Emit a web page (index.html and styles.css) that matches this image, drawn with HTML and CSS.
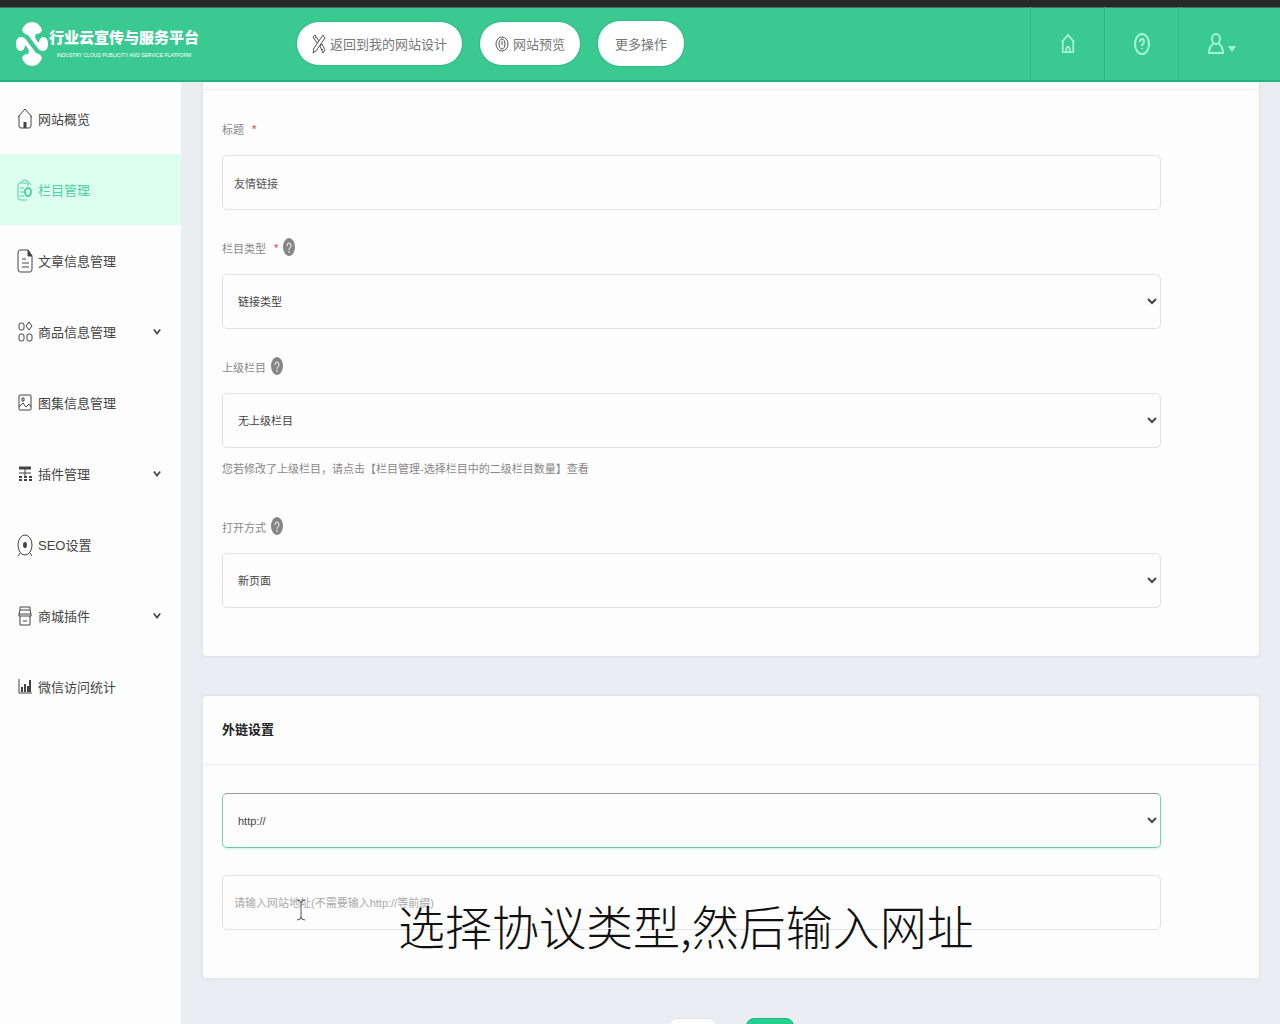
FILE: index.html
```html
<!DOCTYPE html>
<html lang="zh-CN">
<head>
<meta charset="utf-8">
<meta name="viewport" content="width=device-width, initial-scale=1">
<title>栏目管理</title>
<link rel="stylesheet" href="styles.css">
</head>
<body>
<div class="app">
  <header class="topbar">
    <a class="brand" href="#">
      <svg class="brand-mark" width="34" height="46" viewBox="0 0 34 46" aria-hidden="true">
        <g fill="#fff">
          <path d="M7 9Q10 1 17 1t10 8q-1 4-6 4-2 3 1 7l2 2q0-5 4-6 5 0 5 7t-5 7q-4 0-6-4L13 14Q8 13 7 9z"/>
          <path d="M27 37q-3 8-10 8T7 37q1-4 6-4 2-3-1-7l-2-2q0 5-4 6-5 0-5-7t5-7q4 0 6 4l9 12q5 1 6 5z"/>
        </g>
      </svg>
      <span class="brand-text">
        <strong class="brand-name">行业云宣传与服务平台</strong>
        <span class="brand-sub">INDUSTRY CLOUD PUBLICITY AND SERVICE PLATFORM</span>
      </span>
    </a>
    <nav class="actions" aria-label="快捷操作">
      <button class="pill" type="button">
        <svg width="14" height="20" viewBox="0 0 14 20" class="line" aria-hidden="true"><path d="M11 1l2 3-9 13-3 2 1-5zM1 3l2-2 4 6-2 2zM8 12l2-2 3 6-2 3zM3 4l1-1M10 16l1-1"/></svg>
        返回到我的网站设计
      </button>
      <button class="pill" type="button">
        <svg width="14" height="18" viewBox="0 0 14 18" class="line" aria-hidden="true"><ellipse cx="7" cy="9" rx="6" ry="7"/><ellipse cx="7" cy="9" rx="3" ry="5"/><path d="M7 6v4"/></svg>
        网站预览
      </button>
      <button class="pill pill-tall" type="button">更多操作</button>
    </nav>
    <nav class="tools" aria-label="账户">
      <a class="tool" href="#" aria-label="首页"><svg width="14" height="20" viewBox="0 0 16 22" preserveAspectRatio="none" class="line bold" aria-hidden="true"><path d="M1 9l7-8 7 8M2 8v12h12V8M6 20v-4q2-4 4 0v4"/></svg></a>
      <a class="tool" href="#" aria-label="帮助"><svg width="16" height="22" viewBox="0 0 16 22" class="line bold" aria-hidden="true"><ellipse cx="8" cy="11" rx="7" ry="10"/><path d="M6 9q0-3 2-3t2 3q0 2-2 3v1M8 15v1"/></svg></a>
      <a class="tool tool-user" href="#" aria-label="用户"><svg width="28" height="22" viewBox="0 0 28 22" class="line bold" aria-hidden="true"><ellipse cx="8" cy="6" rx="4" ry="5"/><path d="M5 11q-4 3-4 9h14q0-6-4-9"/><path d="M20 13h8l-4 6z" fill="currentColor" stroke="none"/></svg></a>
    </nav>
  </header>

  <div class="shell">
    <nav class="sidebar" aria-label="主菜单">
      <a class="item" href="#"><svg width="16" height="22" viewBox="0 0 16 22" class="line" aria-hidden="true"><path d="M1 9l7-8 7 8M2 8v10q0 2 2 2h8q2 0 2-2V8"/><path d="M8 14v6" stroke-width="3"/></svg><span>网站概览</span></a>
      <a class="item item-on" href="#"><svg width="16" height="24" viewBox="0 0 16 24" class="line" aria-hidden="true"><path d="M11 8V5H3Q1 5 1 8v11q0 3 2 3h7M4 5q1-3 4-3t6 5M3 10h4M3 14h4M3 18h4"/><ellipse cx="11" cy="14" rx="3" ry="4" stroke-width="2"/></svg><span>栏目管理</span></a>
      <a class="item" href="#"><svg width="16" height="24" viewBox="0 0 16 24" class="line" aria-hidden="true"><path d="M3 1h8l4 6v13q0 3-2 3H3q-2 0-2-3V4q0-3 2-3zM5 10h4M5 14h7M5 18h7"/><path d="M11 1v6h4z" fill="currentColor"/></svg><span>文章信息管理</span></a>
      <a class="item" href="#"><svg width="16" height="22" viewBox="0 0 16 22" class="line" aria-hidden="true"><rect x="2" y="2" width="5" height="7" rx="2"/><path d="M12 1l3 4-3 4-3-4z"/><rect x="2" y="13" width="5" height="7" rx="2"/><rect x="10" y="13" width="5" height="7" rx="2"/></svg><span>商品信息管理</span><svg class="chev line bold" width="8" height="8" viewBox="0 0 10 8" aria-hidden="true"><path d="M1 1l4 5 4-5"/></svg></a>
      <a class="item" href="#"><svg width="16" height="18" viewBox="0 0 16 18" class="line" aria-hidden="true"><rect x="2" y="1" width="12" height="15" rx="1"/><path d="M2 13l4-4 3 4 3-3 2 3M5 4v3h2V4z"/></svg><span>图集信息管理</span></a>
      <a class="item" href="#"><svg width="16" height="18" viewBox="0 0 16 18" class="line" aria-hidden="true"><path d="M2 3h12" stroke-width="3"/><path d="M8 4v8M2 8h12"/><path d="M2 12h3M7 12h3M12 12h3M2 15h3M7 15h3M12 15h3" stroke-width="2"/></svg><span>插件管理</span><svg class="chev line bold" width="8" height="8" viewBox="0 0 10 8" aria-hidden="true"><path d="M1 1l4 5 4-5"/></svg></a>
      <a class="item" href="#"><svg width="16" height="24" viewBox="0 0 16 24" class="line" aria-hidden="true"><ellipse cx="8" cy="12" rx="7" ry="10"/><ellipse cx="8" cy="12" rx="2" ry="3" fill="currentColor" stroke="none"/><path d="M3 20l-2 3M13 20l2 3"/></svg><span>SEO设置</span></a>
      <a class="item" href="#"><svg width="16" height="20" viewBox="0 0 16 20" class="line" aria-hidden="true"><path d="M3 1h10v3H3zM3 4L2 8v2h12V8l-1-4M2 8h12M3 10v9h10v-9M6 15h4"/></svg><span>商城插件</span><svg class="chev line bold" width="8" height="8" viewBox="0 0 10 8" aria-hidden="true"><path d="M1 1l4 5 4-5"/></svg></a>
      <a class="item" href="#"><svg width="16" height="18" viewBox="0 0 16 18" class="line" aria-hidden="true"><path d="M2 1v14h13"/><path d="M4 9h2v5H4zM7 6h2v8H7zM10 8h2v6h-2zM12 2h2v12h-2z" fill="currentColor" stroke="none"/></svg><span>微信访问统计</span></a>
    </nav>

    <main class="main">
      <form class="form">
        <section class="card card-first">
          <div class="card-edge"></div>
          <div class="card-body">
            <div class="field">
              <label class="label" for="title">标题 <span class="req">*</span></label>
              <input class="control" id="title" type="text" value="友情链接">
            </div>
            <div class="field">
              <label class="label" for="type">栏目类型 <span class="req">*</span>
                <svg class="help" width="12" height="20" viewBox="0 0 12 20" aria-hidden="true"><ellipse cx="6" cy="9" rx="6" ry="9"/><path d="M4 8q0-3 2-3t2 3q0 1-2 3v1M6 13v2"/></svg></label>
              <select class="control" id="type"><option>链接类型</option></select>
            </div>
            <div class="field">
              <label class="label" for="parent">上级栏目
                <svg class="help" width="12" height="20" viewBox="0 0 12 20" aria-hidden="true"><ellipse cx="6" cy="9" rx="6" ry="9"/><path d="M4 8q0-3 2-3t2 3q0 1-2 3v1M6 13v2"/></svg></label>
              <select class="control" id="parent"><option>无上级栏目</option></select>
              <p class="hint">您若修改了上级栏目，请点击【栏目管理-选择栏目中的二级栏目数量】查看</p>
            </div>
            <div class="field">
              <label class="label" for="target">打开方式
                <svg class="help" width="12" height="20" viewBox="0 0 12 20" aria-hidden="true"><ellipse cx="6" cy="9" rx="6" ry="9"/><path d="M4 8q0-3 2-3t2 3q0 1-2 3v1M6 13v2"/></svg></label>
              <select class="control" id="target"><option>新页面</option></select>
            </div>
          </div>
        </section>

        <section class="card">
          <h2 class="card-title">外链设置</h2>
          <div class="card-body">
            <select class="control control-focus" aria-label="协议类型"><option>http://</option></select>
            <input class="control" type="text" aria-label="网站地址" placeholder="请输入网站地址(不需要输入http://等前缀)">
          </div>
        </section>

        <div class="buttons">
          <button class="btn" type="button" aria-label="返回"></button>
          <button class="btn btn-save" type="submit" aria-label="保存"></button>
        </div>
      </form>
    </main>
  </div>
</div>

<svg class="cursor" width="10" height="24" viewBox="0 0 10 24" aria-hidden="true"><path d="M1 2q4 0 4 3 0-3 4-3M5 5v14M1 22q4 0 4-3 0 3 4 3"/></svg>
<p class="caption">选择协议类型,然后输入网址</p>
</body>
</html>
```
FILE: styles.css
```css
* {
  box-sizing: border-box;
}

body {
  margin: 0;
  background: #ecedf2;
  color: #555;
  font-family: "Liberation Sans", "Noto Sans CJK SC", sans-serif;
  font-size: 13px;
}

a {
  color: inherit;
  text-decoration: none;
}

button,
input,
select {
  font: inherit;
}

.line {
  fill: none;
  stroke: currentColor;
  stroke-width: 1;
  flex: none;
}

.bold {
  stroke-width: 2;
}

.app {
  display: flex;
  flex-direction: column;
  height: 100vh;
  overflow: hidden;
}

/* Top bar */
.topbar {
  display: flex;
  align-items: center;
  flex: none;
  height: 82px;
  border-top: 7px solid #262928;
  border-bottom: 2px solid #22b57c;
  background: #3bc992;
  box-shadow: inset 0 1px #4b6f61;
}

.brand {
  display: flex;
  align-items: center;
  width: 282px;
  margin-left: 15px;
  color: #fff;
}

.brand-text {
  display: flex;
  flex-direction: column;
  align-items: center;
}

.brand-name {
  font-size: 15px;
  font-weight: 900;
  line-height: 22px;
}

.brand-sub {
  font-size: 5px;
  line-height: 12px;
}

.actions {
  display: flex;
  align-items: center;
  gap: 18px;
  flex: 1;
}

.pill {
  display: flex;
  align-items: center;
  gap: 4px;
  height: 43px;
  padding: 0 15px;
  border: 0;
  border-radius: 22px;
  background: #fff;
  color: #777;
  box-shadow: 0 0 2px #159f69;
  white-space: nowrap;
}

.pill .line {
  color: #555;
}

.pill-tall {
  height: 45px;
  padding: 0 17px;
}

.tools {
  display: flex;
  align-self: stretch;
}

.tool {
  display: flex;
  align-items: center;
  justify-content: center;
  width: 74px;
  border-left: 1px solid #33b783;
  color: #a4f5d5;
}

.tool-user {
  width: 102px;
  padding-right: 16px;
}

/* Side menu */
.shell {
  display: flex;
  flex: 1;
  min-height: 0;
}

.sidebar {
  flex: none;
  width: 181px;
  padding-top: 1px;
  background: #fdfdfd;
}

.item {
  display: flex;
  align-items: center;
  gap: 5px;
  height: 71px;
  padding: 0 20px 0 17px;
  color: #444;
}

.item-on {
  background: #dcfff2;
  color: #4fd0a0;
}

.chev {
  margin-left: auto;
}

/* Form */
.main {
  flex: 1;
  min-width: 0;
  overflow: hidden;
  padding: 0 21px 0 22px;
}

.card {
  margin-bottom: 40px;
  border-radius: 4px;
  background: #fdfdfd;
  box-shadow: 0 0 4px #d9dbe1;
}

.card-first {
  border-radius: 0 0 4px 4px;
}

.card-edge {
  height: 8px;
  border-bottom: 1px solid #f3eaec;
}

.card-title {
  margin: 0;
  padding: 0 19px;
  border-bottom: 1px solid #e7f0f5;
  color: #222;
  font-size: 13px;
  font-weight: 700;
  line-height: 68px;
}

.card-body {
  display: flex;
  flex-direction: column;
  gap: 27px;
  padding: 28px 98px 48px 19px;
}

.field {
  display: flex;
  flex-direction: column;
}

.label {
  display: flex;
  align-items: center;
  gap: 5px;
  height: 22px;
  margin-bottom: 15px;
  color: #888;
  font-size: 11px;
}

.req {
  margin-left: 3px;
  color: #e23b4a;
}

.help {
  fill: #858585;
}

.help path {
  fill: none;
  stroke: #fff;
  stroke-width: 1;
}

.control {
  width: 100%;
  height: 55px;
  padding: 0 11px;
  border: 1px solid #e2e2e4;
  border-radius: 5px;
  background: #fdfdfd;
  color: #555;
  font-size: 11px;
}

select.control {
  padding: 0 0 0 11px;
  color: #444;
}

.control::placeholder {
  color: #aaa;
}

select.control-focus {
  border-color: #999 #7ed1b0 #6cc7a2;
  box-shadow: 0 1px 2px #c8f7e5;
}

.hint {
  margin: 11px 0 10px;
  color: #888;
  font-size: 11px;
  line-height: 20px;
}

.buttons {
  display: flex;
  justify-content: center;
  gap: 29px;
}

.btn {
  width: 48px;
  height: 40px;
  border: 1px solid #e2e2e4;
  border-radius: 8px;
  background: #fff;
}

.btn-save {
  border-color: #22b57c;
  background: #24cf92;
}

/* Video subtitle and pointer, over the page */
.caption {
  position: absolute;
  left: 398px;
  top: 890px;
  margin: 0;
  color: #111;
  font-family: "Noto Sans CJK SC", sans-serif;
  font-size: 47px;
  font-weight: 300;
  line-height: 70px;
  white-space: nowrap;
}

.cursor {
  position: absolute;
  left: 296px;
  top: 898px;
  fill: none;
  stroke: #555;
}
```
